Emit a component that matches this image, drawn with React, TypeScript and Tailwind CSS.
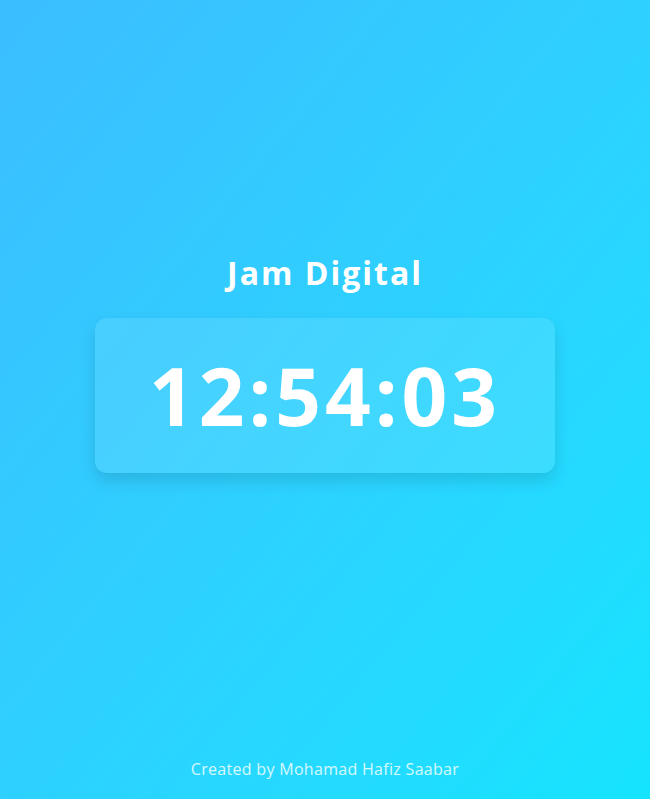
export default function App() {
  const time = "12:54:03";

  return (
    <div
      className="min-h-screen flex flex-col bg-gradient-to-br from-[#3bbdff] to-[#14e4ff] text-white"
      style={{ fontFamily: '"Open Sans", "Noto Sans", sans-serif' }}
    >
      <main className="flex-1 flex flex-col items-center justify-center pb-[36px]">
        <h1 className="text-[32px] font-bold leading-[48px] tracking-[2px] mb-[21px]">Jam Digital</h1>
        <div className="w-[460px] h-[155px] rounded-xl bg-white/10 shadow-[0_8px_16px_rgba(0,0,0,0.12)] flex items-center justify-center">
          <span className="text-[80px] font-bold tracking-[4px] leading-none">{time}</span>
        </div>
      </main>
      <footer className="pb-[18px] text-center text-[16px] tracking-[0.3px] text-white/80">
        Created by Mohamad Hafiz Saabar
      </footer>
    </div>
  );
}
